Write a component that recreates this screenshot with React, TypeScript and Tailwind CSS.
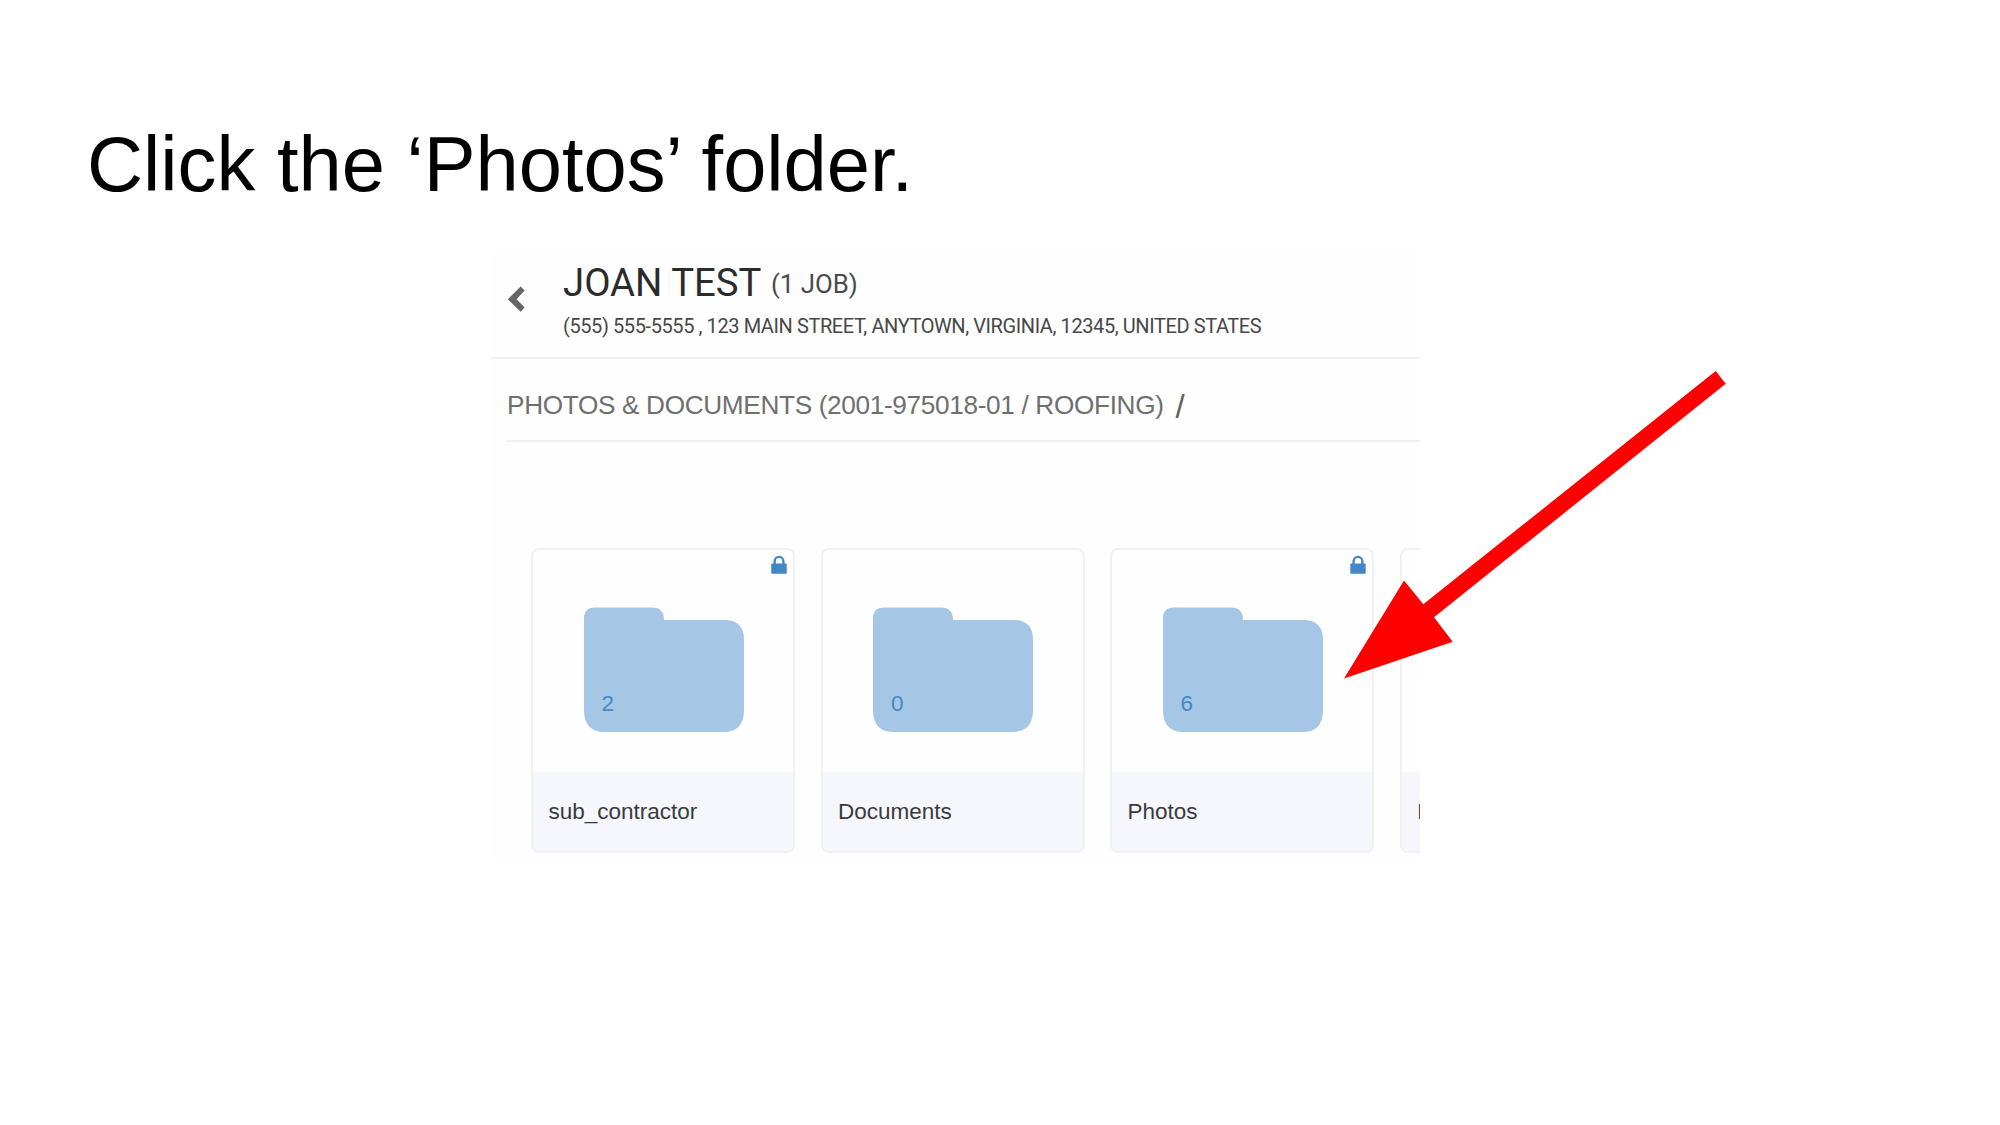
type Folder = { name: string; count?: number; locked?: boolean };

const folders: Folder[] = [
  { name: 'sub_contractor', count: 2, locked: true },
  { name: 'Documents', count: 0 },
  { name: 'Photos', count: 6, locked: true },
  { name: 'I' },
];

function ChevronLeft() {
  return (
    <svg className="ml-[16px] mt-[36px] h-[27px] w-[18px] shrink-0" viewBox="0 0 18 27" fill="#666666">
      <path d="M13.6 0.6 17.6 4.6 9.6 13.2 17.6 21.6 13.6 25.8 0.8 13.2Z" />
    </svg>
  );
}

function Lock() {
  return (
    <svg className="absolute right-[6px] top-[5px] h-[19px] w-[16px]" viewBox="0 0 16 19">
      <path d="M3.6 9.5V6.6a4.4 4.7 0 0 1 8.8 0V9.5" fill="none" stroke="#4186c6" strokeWidth="2.4" />
      <rect x="0.3" y="8.4" width="15.4" height="10.4" rx="0.9" fill="#4186c6" />
    </svg>
  );
}

function FolderIcon({ count }: { count: number }) {
  return (
    <div className="relative h-[125px] w-[160px]">
      <svg className="h-full w-full" viewBox="0 0 160 125" fill="#a5c7e5">
        <path d="M0 11.5Q0 0.5 11 0.5H68Q80 0.5 80 13H142Q160 14 160 32.5V105Q159 124 141 125H19Q1 124 0 105Z" />
      </svg>
      <span className="absolute bottom-[14px] left-[18px] text-[22.5px] leading-[28px] text-[#4488c5]">{count}</span>
    </div>
  );
}

function FolderCard({ folder }: { folder: Folder }) {
  return (
    <div className="relative flex h-[305px] w-[264px] shrink-0 flex-col overflow-hidden rounded-[8px] border-2 border-[#f1f1f2] bg-[#fefefe]">
      <div className="flex h-[222px] justify-center pl-px pt-[57px]">
        {folder.count !== undefined && <FolderIcon count={folder.count} />}
      </div>
      <div className="h-[79px] bg-[#f5f7fc] pl-[15.5px] text-[22.5px] leading-[80px] text-[#3a3a3c]">{folder.name}</div>
      {folder.locked && <Lock />}
    </div>
  );
}

export default function App() {
  return (
    <main className="relative h-[1125px] w-[2000px] overflow-hidden bg-white pt-[119px] font-['Liberation_Sans',Arial,sans-serif]">
      <h1 className="ml-[87px] whitespace-nowrap text-[77.7px] leading-[90px] text-black">Click the ‘Photos’ folder.</h1>

      <section className="ml-[491px] mt-[41px] h-[610px] w-[929px] overflow-hidden bg-[#fefefe]">
        <header className="flex h-[109px] border-b-2 border-[#f0f0f0] font-[Roboto,sans-serif]">
          <ChevronLeft />
          <div className="ml-[38px] whitespace-nowrap pt-[9px]">
            <div className="flex h-[48px] items-baseline leading-[48px]">
              <span className="w-[208px] text-[38.3px] text-[#2b2b2b]">JOAN TEST</span>
              <span className="-translate-y-[3px] text-[25.8px] text-[#4a4a4a]">(1 JOB)</span>
            </div>
            <p className="mt-[7px] text-[20px] leading-[24px] tracking-[-0.41px] text-[#484848]">
              (555) 555-5555 , 123 MAIN STREET, ANYTOWN, VIRGINIA, 12345, UNITED STATES
            </p>
          </div>
        </header>

        <nav className="ml-[15px] flex h-[83px] items-baseline whitespace-nowrap border-b-2 border-[#f0f0f0] pt-[3px] text-[26.2px] leading-[81px] tracking-[-0.34px] text-[#6f6f6f]">
          <span className="pl-px">PHOTOS &amp; DOCUMENTS (2001-975018-01 / ROOFING)</span>
          <span className="ml-[12px] translate-y-[4px] text-[33px] text-[#606060]">/</span>
        </nav>

        <div className="ml-[40px] mt-[106px] flex gap-[25.5px]">
          {folders.map((folder) => (
            <FolderCard key={folder.name} folder={folder} />
          ))}
        </div>
      </section>

      <svg className="absolute left-[1340px] top-[360px] h-[330px] w-[400px]" viewBox="0 0 400 330" fill="#ff0000">
        <path d="M375.7 11 385.7 23.7 94 257.3 112.7 281.7 4 318.5 64 220.5 83.3 244.3Z" />
      </svg>
    </main>
  );
}
